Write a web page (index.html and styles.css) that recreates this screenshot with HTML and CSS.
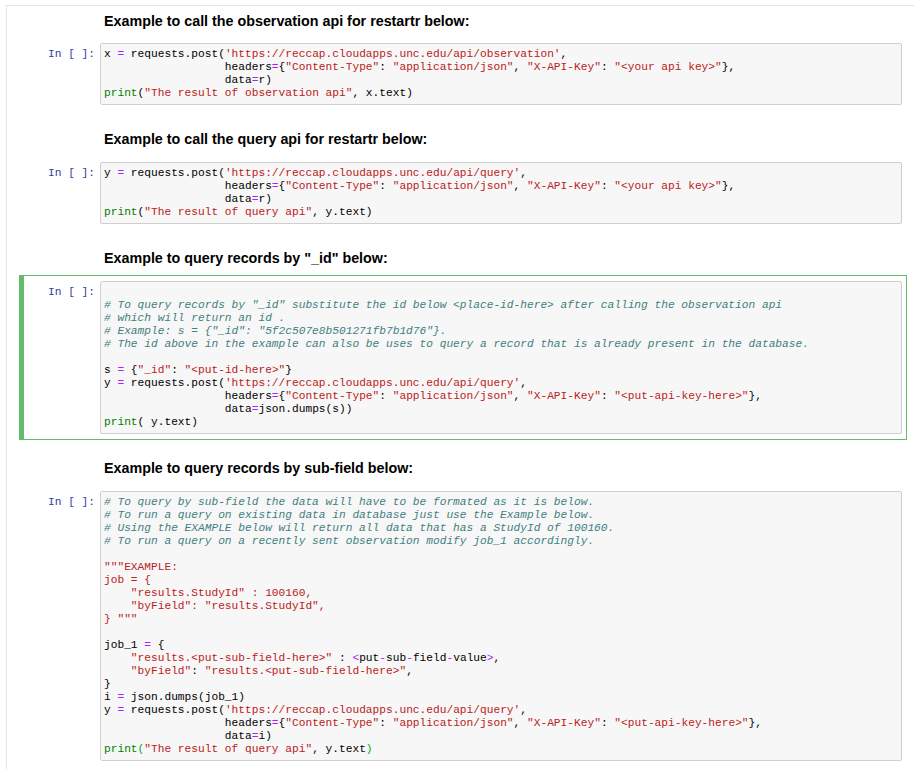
FILE: index.html
```html
<!DOCTYPE html>
<html>
<head>
<meta charset="utf-8">
<title>Notebook</title>
<link rel="stylesheet" href="styles.css">
</head>
<body>
<div class="nb">

  <div class="cell md first">
    <div class="prompt"></div>
    <div class="content"><h3>Example to call the observation api for restartr below:</h3></div>
  </div>

  <div class="cell">
    <div class="prompt">In&nbsp;[&nbsp;]:</div>
    <div class="input">
<div class="ln">x <span class="o">=</span> requests.post(<span class="s">'https://reccap.cloudapps.unc.edu/api/observation'</span>,</div>
<div class="ln">                  headers<span class="o">=</span>{<span class="s">"Content-Type"</span>: <span class="s">"application/json"</span>, <span class="s">"X-API-Key"</span>: <span class="s">"&lt;your api key&gt;"</span>},</div>
<div class="ln">                  data<span class="o">=</span>r)</div>
<div class="ln"><span class="k">print</span>(<span class="s">"The result of observation api"</span>, x.text)</div>
    </div>
  </div>

  <div class="cell md">
    <div class="prompt"></div>
    <div class="content"><h3>Example to call the query api for restartr below:</h3></div>
  </div>

  <div class="cell">
    <div class="prompt">In&nbsp;[&nbsp;]:</div>
    <div class="input">
<div class="ln">y <span class="o">=</span> requests.post(<span class="s">'https://reccap.cloudapps.unc.edu/api/query'</span>,</div>
<div class="ln">                  headers<span class="o">=</span>{<span class="s">"Content-Type"</span>: <span class="s">"application/json"</span>, <span class="s">"X-API-Key"</span>: <span class="s">"&lt;your api key&gt;"</span>},</div>
<div class="ln">                  data<span class="o">=</span>r)</div>
<div class="ln"><span class="k">print</span>(<span class="s">"The result of query api"</span>, y.text)</div>
    </div>
  </div>

  <div class="cell md">
    <div class="prompt"></div>
    <div class="content"><h3>Example to query records by "_id" below:</h3></div>
  </div>

  <div class="cell sel">
    <div class="prompt">In&nbsp;[&nbsp;]:</div>
    <div class="input">
<div class="ln"></div>
<div class="ln"><span class="c"># To query records by "_id" substitute the id below &lt;place-id-here&gt; after calling the observation api</span></div>
<div class="ln"><span class="c"># which will return an id .</span></div>
<div class="ln"><span class="c"># Example: s = {"_id": "5f2c507e8b501271fb7b1d76"}.</span></div>
<div class="ln"><span class="c"># The id above in the example can also be uses to query a record that is already present in the database.</span></div>
<div class="ln"></div>
<div class="ln">s <span class="o">=</span> {<span class="s">"_id"</span>: <span class="s">"&lt;put-id-here&gt;"</span>}</div>
<div class="ln">y <span class="o">=</span> requests.post(<span class="s">'https://reccap.cloudapps.unc.edu/api/query'</span>,</div>
<div class="ln">                  headers<span class="o">=</span>{<span class="s">"Content-Type"</span>: <span class="s">"application/json"</span>, <span class="s">"X-API-Key"</span>: <span class="s">"&lt;put-api-key-here&gt;"</span>},</div>
<div class="ln">                  data<span class="o">=</span>json.dumps(s))</div>
<div class="ln"><span class="k">print</span>( y.text)</div>
    </div>
  </div>

  <div class="cell md">
    <div class="prompt"></div>
    <div class="content"><h3>Example to query records by sub-field below:</h3></div>
  </div>

  <div class="cell">
    <div class="prompt">In&nbsp;[&nbsp;]:</div>
    <div class="input">
<div class="ln"><span class="c"># To query by sub-field the data will have to be formated as it is below.</span></div>
<div class="ln"><span class="c"># To run a query on existing data in database just use the Example below.</span></div>
<div class="ln"><span class="c"># Using the EXAMPLE below will return all data that has a StudyId of 100160.</span></div>
<div class="ln"><span class="c"># To run a query on a recently sent observation modify job_1 accordingly.</span></div>
<div class="ln"></div>
<div class="ln"><span class="s">"""EXAMPLE:</span></div>
<div class="ln"><span class="s">job = {</span></div>
<div class="ln"><span class="s">    "results.StudyId" : 100160,</span></div>
<div class="ln"><span class="s">    "byField": "results.StudyId",</span></div>
<div class="ln"><span class="s">} """</span></div>
<div class="ln"></div>
<div class="ln">job_1 <span class="o">=</span> {</div>
<div class="ln">    <span class="s">"results.&lt;put-sub-field-here&gt;"</span> : <span class="o">&lt;</span>put<span class="o">-</span>sub<span class="o">-</span>field<span class="o">-</span>value<span class="o">&gt;</span>,</div>
<div class="ln">    <span class="s">"byField"</span>: <span class="s">"results.&lt;put-sub-field-here&gt;"</span>,</div>
<div class="ln">}</div>
<div class="ln">i <span class="o">=</span> json.dumps(job_1)</div>
<div class="ln">y <span class="o">=</span> requests.post(<span class="s">'https://reccap.cloudapps.unc.edu/api/query'</span>,</div>
<div class="ln">                  headers<span class="o">=</span>{<span class="s">"Content-Type"</span>: <span class="s">"application/json"</span>, <span class="s">"X-API-Key"</span>: <span class="s">"&lt;put-api-key-here&gt;"</span>},</div>
<div class="ln">                  data<span class="o">=</span>i)</div>
<div class="ln"><span class="k">print</span><span class="m">(</span><span class="s">"The result of query api"</span>, y.text<span class="m">)</span></div>
    </div>
  </div>

</div>
</body>
</html>
```

FILE: styles.css
```css
* {
  box-sizing: border-box;
}

html, body {
  margin: 0;
  padding: 0;
  background: #ffffff;
}

body {
  font-family: "Liberation Sans", Arial, Helvetica, sans-serif;
  color: #000;
}

.nb {
  margin: 5px 0 0 6px;
  border-top: 1px solid #e4e4e4;
  border-left: 1px solid #e4e4e4;
  padding: 0 7px 0 12px;
  min-height: 764px;
}

.cell {
  display: flex;
  position: relative;
  border: 1px solid transparent;
  padding: 5px 4px 5px 5px;
}

.cell.sel {
  border-color: #66bb6a;
}

.cell.sel::before {
  content: "";
  position: absolute;
  left: -1px;
  top: -1px;
  bottom: -1px;
  width: 5px;
  background: #66bb6a;
}

.prompt {
  flex: none;
  width: 75px;
  padding: 5px 5px 0 0;
  text-align: right;
  font-family: "Liberation Mono", "Courier New", monospace;
  font-size: 11.2px;
  line-height: 13px;
  color: #303f9f;
  white-space: nowrap;
}

.content {
  flex: 1;
  min-width: 0;
  padding-left: 4px;
}

.content h3 {
  margin: 14px 0 2px;
  font-size: 14.3px;
  line-height: 17px;
  font-weight: bold;
}

.md.first .content h3 {
  margin: 1px 0 1px;
}

.input {
  flex: 1;
  min-width: 0;
  background: #f7f7f7;
  border: 1px solid #cfcfcf;
  border-radius: 2px;
  padding: 4px 3px;
  font-family: "Liberation Mono", "Courier New", monospace;
  font-size: 11.2px;
  line-height: 13px;
  color: #000;
}

.ln {
  white-space: pre;
  height: 13px;
}

.o { color: #aa22ff; }
.s { color: #ba2121; }
.k { color: #008000; }
.c { color: #408080; font-style: italic; }
.m { color: #00aa00; }
```
